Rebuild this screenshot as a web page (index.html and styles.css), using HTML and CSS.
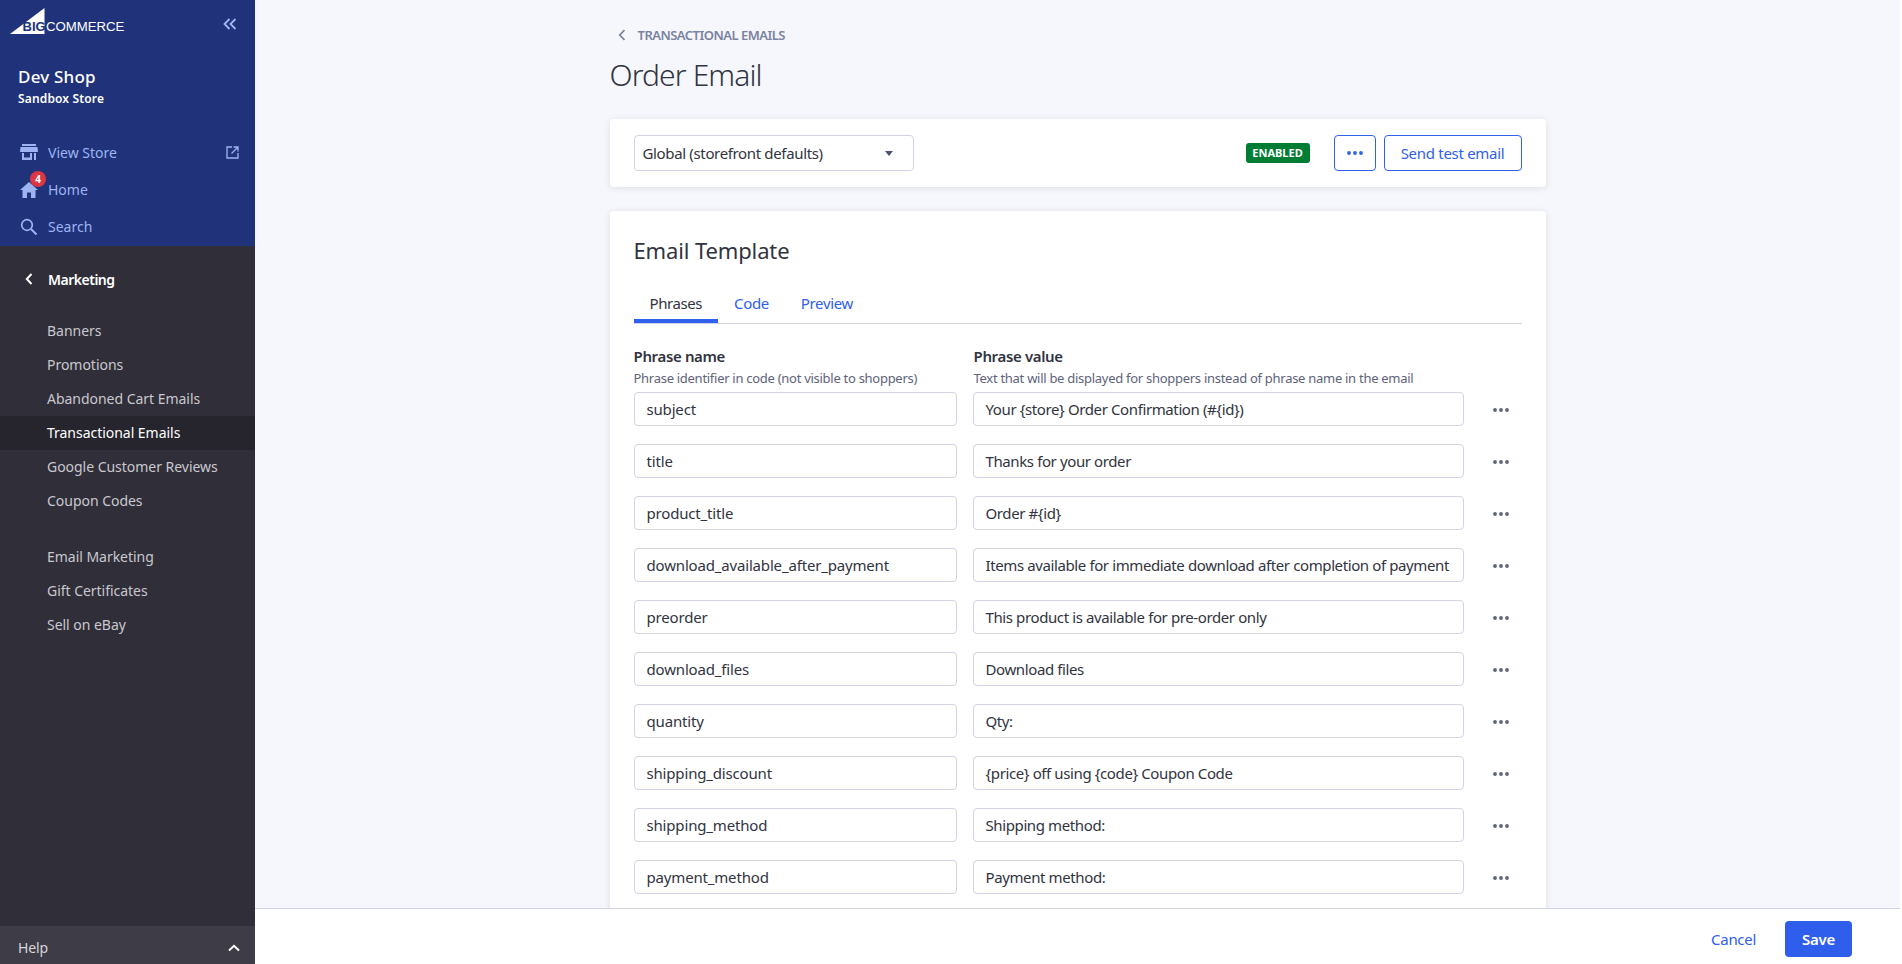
FILE: index.html
```html
<!DOCTYPE html>
<html lang="en">
<head>
<meta charset="utf-8">
<title>Order Email</title>
<link rel="stylesheet" href="styles.css">
</head>
<body>
<div class="app">
  <aside class="sidebar">
    <div class="side-top">
      <div class="logo-row">
        <svg class="logo" width="120" height="28" viewBox="0 0 120 28">
          <path d="M0 26 L34.500 0 V26 Z" fill="#fff"/>
          <text x="12.500" y="23" class="logo-big">BIG</text>
          <text x="36" y="22.500" class="logo-com">COMMERCE</text>
        </svg>
        <svg class="collapse" width="14" height="12" viewBox="0 0 14 12"><path d="M6.500 1 L1.500 6 L6.500 11 M12.500 1 L7.500 6 L12.500 11" fill="none" stroke="#a3b6f5" stroke-width="1.800"/></svg>
      </div>
      <div class="store-name">Dev Shop</div>
      <div class="store-sub">Sandbox Store</div>
      <nav class="top-nav">
        <a class="top-item item-store">
          <svg width="18" height="16" viewBox="0 0 18 16"><path d="M2 0 H16 V2 H2 Z M0.500 3 H17.500 L18 8 H0 Z M2 9 H4 V13.500 H10 V9 H12 V16 H2 Z M14 9 H16 V16 H14 Z" fill="#9db3f2"/></svg>
          <span class="top-label">View Store</span>
          <svg class="ext" width="13" height="13" viewBox="0 0 13 13"><path d="M6 1 H1 V12 H12 V7 M7.500 1 H12 V5.500 M12 1 L5.500 7.500" fill="none" stroke="#9db3f2" stroke-width="1.300"/></svg>
        </a>
        <a class="top-item item-home">
          <svg width="18" height="16" viewBox="0 0 18 16"><path d="M9 0 L18 8 H15.500 V16 H11 V10.500 H7 V16 H2.500 V8 H0 Z" fill="#9db3f2"/></svg>
          <span class="badge">4</span>
          <span class="top-label">Home</span>
        </a>
        <a class="top-item item-search">
          <svg width="18" height="18" viewBox="0 0 18 18"><circle cx="7" cy="7" r="5.300" fill="none" stroke="#9db3f2" stroke-width="1.700"/><path d="M11 11 L16.500 16.500" stroke="#9db3f2" stroke-width="2"/></svg>
          <span class="top-label">Search</span>
        </a>
      </nav>
    </div>
    <div class="side-bottom">
      <div class="section-head">
        <svg width="8" height="12" viewBox="0 0 8 12"><path d="M6.500 1 L1.800 6 L6.500 11" fill="none" stroke="#fff" stroke-width="2"/></svg>
        <span>Marketing</span>
      </div>
      <ul class="side-list">
        <li>Banners</li>
        <li>Promotions</li>
        <li>Abandoned Cart Emails</li>
        <li class="active">Transactional Emails</li>
        <li>Google Customer Reviews</li>
        <li>Coupon Codes</li>
      </ul>
      <ul class="side-list second">
        <li>Email Marketing</li>
        <li>Gift Certificates</li>
        <li>Sell on eBay</li>
      </ul>
      <div class="help">
        <span>Help</span>
        <svg width="12" height="8" viewBox="0 0 12 8"><path d="M1 6.500 L6 1.800 L11 6.500" fill="none" stroke="#fff" stroke-width="2"/></svg>
      </div>
    </div>
  </aside>
  <main class="main">
    <div class="scroll">
      <div class="page">
        <a class="crumb">
          <svg width="8" height="12" viewBox="0 0 8 12"><path d="M6.500 1 L1.800 6 L6.500 11" fill="none" stroke="#7a82a0" stroke-width="1.800"/></svg>
          <span>TRANSACTIONAL EMAILS</span>
        </a>
        <h1 class="title">Order Email</h1>
        <section class="card bar">
          <div class="select">
            <span>Global (storefront defaults)</span>
            <i class="caret"></i>
          </div>
          <span class="status">ENABLED</span>
          <button class="btn btn-more"><svg width="16" height="4" viewBox="0 0 16 4"><circle cx="2" cy="2" r="1.900"/><circle cx="8" cy="2" r="1.900"/><circle cx="14" cy="2" r="1.900"/></svg></button>
          <button class="btn btn-test">Send test email</button>
        </section>
        <section class="card template">
          <h2 class="card-title">Email Template</h2>
          <div class="tabs">
            <a class="tab current">Phrases</a>
            <a class="tab">Code</a>
            <a class="tab">Preview</a>
          </div>
          <div class="phrase-head">
            <div>
              <div class="col-title">Phrase name</div>
              <div class="col-desc">Phrase identifier in code (not visible to shoppers)</div>
            </div>
            <div>
              <div class="col-title">Phrase value</div>
              <div class="col-desc">Text that will be displayed for shoppers instead of phrase name in the email</div>
            </div>
          </div>
          <div class="rows">
            <div class="row"><div class="field name">subject</div><div class="field">Your {store} Order Confirmation (#{id})</div><svg class="dots" width="16" height="4" viewBox="0 0 16 4"><circle cx="2" cy="2" r="1.900"/><circle cx="8" cy="2" r="1.900"/><circle cx="14" cy="2" r="1.900"/></svg></div>
            <div class="row"><div class="field name">title</div><div class="field">Thanks for your order</div><svg class="dots" width="16" height="4" viewBox="0 0 16 4"><circle cx="2" cy="2" r="1.900"/><circle cx="8" cy="2" r="1.900"/><circle cx="14" cy="2" r="1.900"/></svg></div>
            <div class="row"><div class="field name">product_title</div><div class="field">Order #{id}</div><svg class="dots" width="16" height="4" viewBox="0 0 16 4"><circle cx="2" cy="2" r="1.900"/><circle cx="8" cy="2" r="1.900"/><circle cx="14" cy="2" r="1.900"/></svg></div>
            <div class="row"><div class="field name">download_available_after_payment</div><div class="field">Items available for immediate download after completion of payment</div><svg class="dots" width="16" height="4" viewBox="0 0 16 4"><circle cx="2" cy="2" r="1.900"/><circle cx="8" cy="2" r="1.900"/><circle cx="14" cy="2" r="1.900"/></svg></div>
            <div class="row"><div class="field name">preorder</div><div class="field">This product is available for pre-order only</div><svg class="dots" width="16" height="4" viewBox="0 0 16 4"><circle cx="2" cy="2" r="1.900"/><circle cx="8" cy="2" r="1.900"/><circle cx="14" cy="2" r="1.900"/></svg></div>
            <div class="row"><div class="field name">download_files</div><div class="field">Download files</div><svg class="dots" width="16" height="4" viewBox="0 0 16 4"><circle cx="2" cy="2" r="1.900"/><circle cx="8" cy="2" r="1.900"/><circle cx="14" cy="2" r="1.900"/></svg></div>
            <div class="row"><div class="field name">quantity</div><div class="field">Qty:</div><svg class="dots" width="16" height="4" viewBox="0 0 16 4"><circle cx="2" cy="2" r="1.900"/><circle cx="8" cy="2" r="1.900"/><circle cx="14" cy="2" r="1.900"/></svg></div>
            <div class="row"><div class="field name">shipping_discount</div><div class="field">{price} off using {code} Coupon Code</div><svg class="dots" width="16" height="4" viewBox="0 0 16 4"><circle cx="2" cy="2" r="1.900"/><circle cx="8" cy="2" r="1.900"/><circle cx="14" cy="2" r="1.900"/></svg></div>
            <div class="row"><div class="field name">shipping_method</div><div class="field">Shipping method:</div><svg class="dots" width="16" height="4" viewBox="0 0 16 4"><circle cx="2" cy="2" r="1.900"/><circle cx="8" cy="2" r="1.900"/><circle cx="14" cy="2" r="1.900"/></svg></div>
            <div class="row"><div class="field name">payment_method</div><div class="field">Payment method:</div><svg class="dots" width="16" height="4" viewBox="0 0 16 4"><circle cx="2" cy="2" r="1.900"/><circle cx="8" cy="2" r="1.900"/><circle cx="14" cy="2" r="1.900"/></svg></div>
          </div>
        </section>
      </div>
    </div>
    <footer class="footer">
      <a class="cancel">Cancel</a>
      <button class="save">Save</button>
    </footer>
  </main>
</div>
</body>
</html>
```
FILE: styles.css
```css
* { box-sizing: border-box; }
html, body { margin: 0; height: 100%; overflow: hidden; }
body { font-family: "Noto Sans", "Open Sans", sans-serif; color: #313440; background: #f5f7fc; }
ul { list-style: none; margin: 0; padding: 0; }
button { font-family: inherit; cursor: pointer; }

.app { display: grid; grid-template-columns: 255px 1fr; height: 964px; }

/* Sidebar */
.sidebar { display: flex; flex-direction: column; height: 964px; }
.side-top { background: #20337a; height: 246px; padding: 8px 0 0; flex: none; }
.logo-row { display: flex; justify-content: space-between; align-items: flex-start; padding: 0 18px 0 10px; height: 52px; }
.logo { display: block; }
.logo-big { font: 700 13px "Liberation Sans", sans-serif; fill: #20337a; }
.logo-com { font: 400 13.200px "Liberation Sans", sans-serif; fill: #fff; }
.collapse { margin-top: 10px; }
.store-name { font-size: 17px; font-weight: 500; color: #fff; line-height: 24px; padding-left: 18px; margin-top: 5px; letter-spacing: 0.2px; }
.store-sub { font-size: 12px; font-weight: 600; color: #fff; line-height: 18px; padding-left: 18px; margin-top: 1px; letter-spacing: 0.15px; }
.top-nav { margin-top: 25px; padding: 0 16px 0 20px; }
.top-item { display: flex; align-items: center; height: 37px; position: relative; color: #9db3f2; }
.top-item.item-store { height: 38px; }
.top-item svg:first-child { flex: none; }
.top-label { font-size: 14px; margin-left: 10px; letter-spacing: 0; }
.ext { margin-left: auto; flex: none; }
.badge { position: absolute; left: 10px; top: 0; width: 16px; height: 16px; border-radius: 50%; background: #db3643; color: #fff; font-size: 10px; font-weight: 700; line-height: 16px; text-align: center; }

.side-bottom { background: #302e38; flex: 1; display: flex; flex-direction: column; min-height: 0; }
.section-head { display: flex; align-items: center; height: 34px; margin-top: 16px; padding-left: 25px; color: #fff; font-size: 14px; font-weight: 600; gap: 15px; letter-spacing: -0.5px; }
.side-list { margin-top: 18px; }
.side-list li { height: 34px; line-height: 34px; padding-left: 47px; font-size: 14px; color: #c9c8cf; letter-spacing: -0.03px; }
.side-list li.active { background: #26252e; color: #fff; }
.side-list.second { margin-top: 22px; }
.help { margin-top: auto; height: 38px; flex: none; background: #3e3c47; display: flex; align-items: center; justify-content: space-between; padding: 5px 15px 0 18px; font-size: 14px; color: #d6d5da; letter-spacing: -0.1px; }

/* Main */
.main { display: flex; flex-direction: column; height: 964px; min-width: 0; border-right: 2px solid #fff; }
.scroll { flex: 1; min-height: 0; overflow: hidden; }
.page { width: 936px; margin: 0 auto; padding-top: 24px; }
.crumb { display: flex; align-items: center; gap: 12px; height: 22px; padding-left: 8px; font-size: 13px; font-weight: 600; color: #7a82a0; letter-spacing: -0.52px; }
.title { margin: 0; font-size: 30px; font-weight: 300; line-height: 44px; color: #313440; margin-top: 7px; letter-spacing: -0.88px; }
.card { background: #fff; border-radius: 4px; box-shadow: 0 1px 6px rgba(49, 52, 64, 0.12); }
.bar { display: flex; align-items: center; height: 68px; margin-top: 22px; padding: 0 24px; }
.select { width: 280px; height: 36px; border: 1px solid #d0d3e3; border-radius: 4px; display: flex; align-items: center; justify-content: space-between; padding: 0 20px 0 8px; font-size: 15px; letter-spacing: -0.35px; }
.caret { width: 0; height: 0; border-left: 4.500px solid transparent; border-right: 4.500px solid transparent; border-top: 5px solid #4a5070; }
.status { margin-left: auto; width: 64px; height: 20px; border-radius: 3px; background: #007d35; color: #fff; font-size: 11px; font-weight: 700; line-height: 20px; text-align: center; }
.btn { height: 36px; background: #fff; border: 1px solid #3060ee; border-radius: 4px; color: #3060ee; }
.btn-more { width: 42px; margin-left: 24px; padding: 0; display: flex; align-items: center; justify-content: center; fill: #3060ee; }
.btn-test { width: 138px; margin-left: 8px; font-size: 15px; letter-spacing: -0.3px; padding: 0; }

.template { margin-top: 24px; padding: 23px 24px 48px; }
.card-title { margin: 0; font-size: 22px; font-weight: 400; line-height: 32px; letter-spacing: -0.13px; }
.tabs { display: flex; margin-top: 21px; border-bottom: 1px solid #d0d3e3; height: 37px; }
.tab { height: 36px; padding: 0 16px; line-height: 32px; font-size: 15px; color: #3060ee; letter-spacing: -0.36px; }
.tab.current { color: #313440; border-bottom: 4px solid #3060ee; letter-spacing: -0.42px; }
.phrase-head { display: grid; grid-template-columns: 340px 1fr; margin-top: 22px; }
.col-title { font-size: 15px; font-weight: 600; line-height: 20px; letter-spacing: -0.35px; }
.col-desc { font-size: 13px; line-height: 20px; color: #5e637a; letter-spacing: -0.28px; margin-top: 2px; }
.rows { display: flex; flex-direction: column; gap: 18px; margin-top: 4px; }
.row { display: grid; grid-template-columns: 323px 491px 16px; column-gap: 16px; align-items: center; height: 34px; }
.row .dots { margin: 2px 0 0 13px; fill: #5e637a; }
.field { height: 34px; border: 1px solid #d0d3e3; border-radius: 4px; padding: 0 13px 0 12px; line-height: 32px; font-size: 15px; letter-spacing: -0.39px; white-space: nowrap; overflow: hidden; }
.field.name { letter-spacing: -0.17px; }

.footer { flex: none; height: 56px; background: #fff; border-top: 1px solid #d0d3e3; display: flex; align-items: center; justify-content: flex-end; padding: 5px 48px 0 0; gap: 29px; }
.cancel { color: #3060ee; font-size: 15px; letter-spacing: -0.3px; }
.save { width: 67px; height: 36px; border: 0; border-radius: 4px; background: #2f5eed; color: #fff; font-size: 15px; font-weight: 600; letter-spacing: -0.3px; padding: 0; }
```
